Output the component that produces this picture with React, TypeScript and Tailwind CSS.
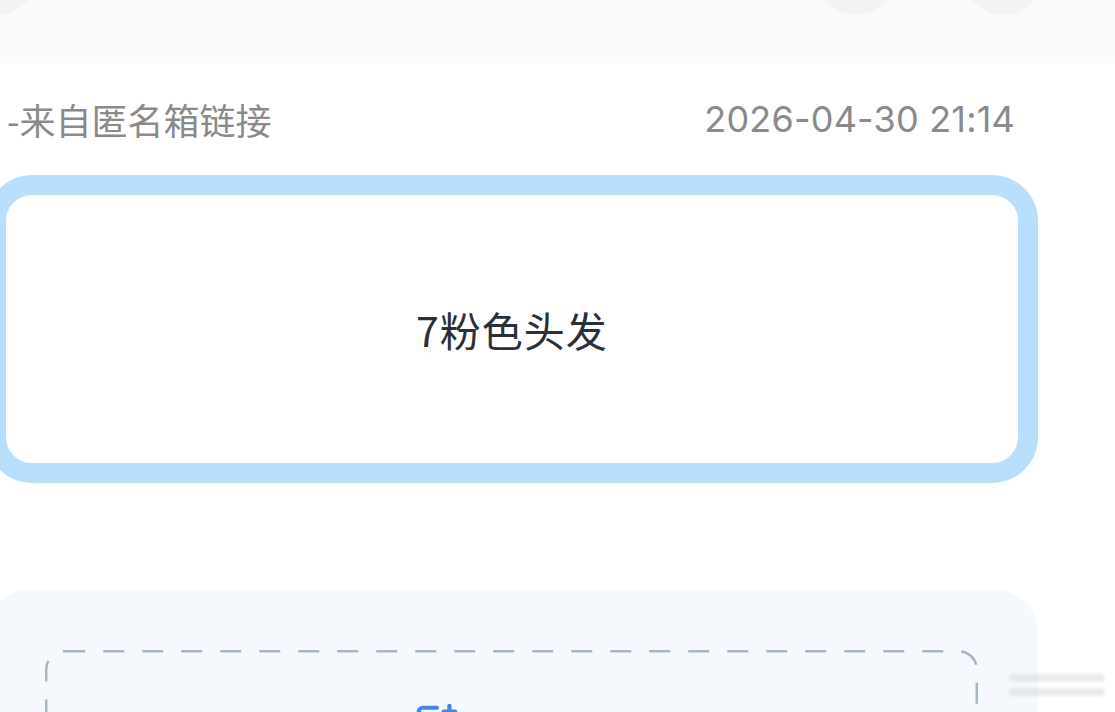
import { ImagePlus } from "lucide-react";

const cjk = { fontFamily: '"Noto Sans CJK SC", "Noto Sans", sans-serif' };

function DashedBox() {
    return (
        <div className="relative h-[200px] rounded-[18px]">
            <svg className="absolute inset-0 w-full h-full">
                <rect
                    x="1.25"
                    y="1.25"
                    width="calc(100% - 2.5px)"
                    height="calc(100% - 2.5px)"
                    rx="18"
                    fill="none"
                    stroke="#a5b7c5"
                    strokeWidth="2.5"
                    strokeDasharray="21 18"
                />
            </svg>
            <div className="flex items-center pt-[52px] pl-[368px] gap-[118px]">
                <ImagePlus className="w-[46px] h-[46px] text-[#3f8ae0]" strokeWidth={2.2} />
                <span className="text-[30px] text-[#9aa3ad]" style={cjk}>
                    添加图片
                </span>
            </div>
        </div>
    );
}

export default function App() {
    return (
        <div className="relative w-full h-[712px] overflow-hidden bg-white">
            <div className="h-[63px] bg-[#fafafa] overflow-hidden">
                <div className="flex -mt-[65px]">
                    <div className="w-[80px] h-[80px] rounded-full bg-[#f3f3f3] -ml-[43px]" />
                    <div className="w-[80px] h-[80px] rounded-full bg-[#f3f3f3] ml-[779px]" />
                    <div className="w-[80px] h-[80px] rounded-full bg-[#f3f3f3] ml-[67px]" />
                </div>
            </div>

            <div className="h-[112px] flex items-center justify-between pl-[7px] pr-[100px] text-[#8a8a8a]">
                <span className="text-[36px] leading-none" style={cjk}>
                    -来自匿名箱链接
                </span>
                <span
                    className="text-[36px] leading-none tracking-[0.2px]"
                    style={{ fontFamily: 'Inter, "Noto Sans", sans-serif' }}
                >
                    2026-04-30 21:14
                </span>
            </div>

            <div className="-ml-[14px] w-[1052px] h-[308px] border-[20px] border-[#b8defb] rounded-[46px] flex items-center justify-center">
                <span className="text-[41px] text-[#2b2f36] leading-none tracking-[1px]" style={cjk}>
                    7粉色头发
                </span>
            </div>

            <div className="mt-[107px] -ml-[14px] w-[1052px] h-[300px] rounded-[42px] bg-[#f5f8fc] pt-[60px] pl-[59px] pr-[60px]">
                <DashedBox />
            </div>

            <div className="absolute right-[10px] bottom-[16px] flex flex-col gap-[6px] blur-[1.5px] opacity-50">
                <div className="w-[96px] h-[8px] rounded bg-[#d6d6d6]" />
                <div className="w-[96px] h-[8px] rounded bg-[#d6d6d6]" />
            </div>
        </div>
    );
}
